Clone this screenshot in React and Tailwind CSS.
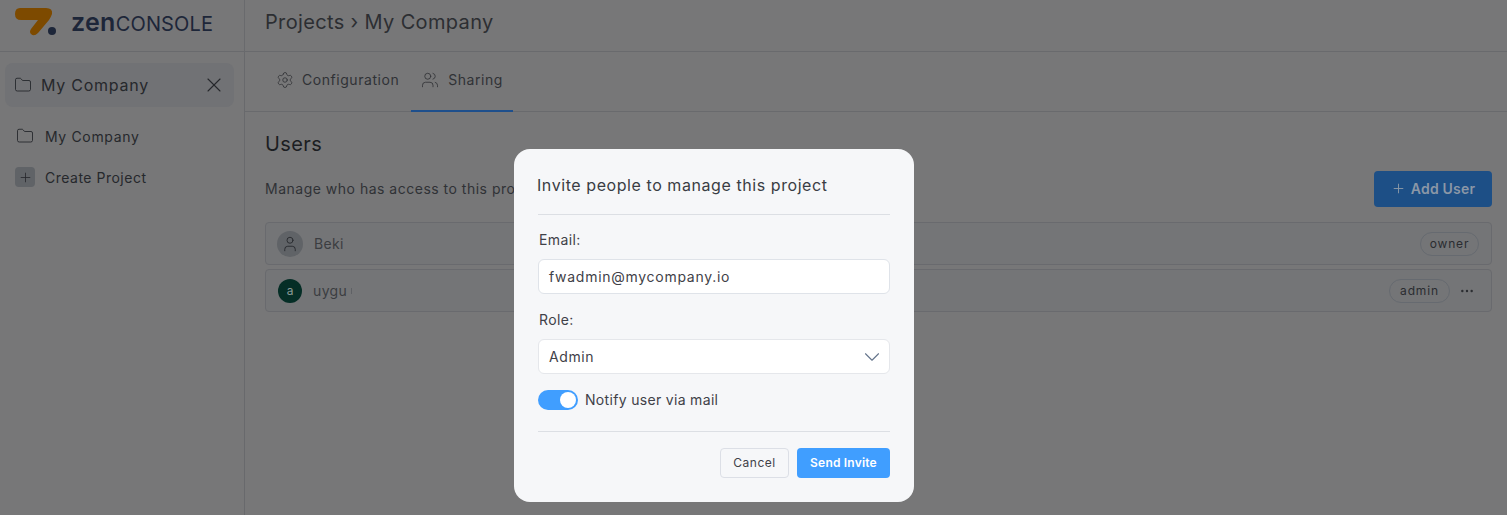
import React from "react";
import { Folder, X, Plus, Settings, Users, User, Ellipsis, ChevronDown } from "lucide-react";

function Logo() {
  return (
    <div className="flex items-start h-[51px] w-[244px] shrink-0 pl-[15px] pt-[8px] gap-[14px]">
      <svg width="42" height="30" viewBox="15 8 42 30" className="shrink-0">
        <path d="M20 8 H46 Q53 8 52 14 Q51 17 49 20 L38 33 Q34 37 31 34 Q29 32 31 29 L38 20 H21 Q15 20 15 14 Q15 8 20 8 Z" fill="#7d4a00" />
        <circle cx="52" cy="31" r="4" fill="#1d2639" />
      </svg>
      <span className="text-[25px] leading-[28px] tracking-[0.3px] text-[#1d2639] whitespace-nowrap">
        <span className="font-semibold">zen</span><span className="uppercase text-[20px] tracking-[0.15px]">console</span>
      </span>
    </div>
  );
}

function Sidebar() {
  return (
    <aside className="w-[245px] shrink-0 border-r border-[#68696c] pt-[11px] px-[5px] text-[#26282c]">
      <div className="h-[44px] w-[229px] rounded-lg bg-[#717275] flex items-center pl-[9px] pr-[8px]">
        <Folder size={18} strokeWidth={1.2} className="shrink-0" />
        <span className="ml-[9px] text-[16px] tracking-[0.75px] flex-1">My Company</span>
        <X size={24} strokeWidth={1.1} className="shrink-0" />
      </div>
      <div className="flex items-center h-[20px] mt-[19px] pl-[11px]">
        <Folder size={18} strokeWidth={1.2} className="shrink-0" />
        <span className="ml-[11px] text-[14px] tracking-[0.65px]">My Company</span>
      </div>
      <div className="flex items-center h-[20px] mt-[21px] pl-[10px]">
        <div className="w-[20px] h-[20px] rounded bg-[#606367] flex items-center justify-center shrink-0">
          <Plus size={15} strokeWidth={1.3} />
        </div>
        <span className="ml-[10px] text-[14px] tracking-[0.5px]">Create Project</span>
      </div>
    </aside>
  );
}

function Row({ avatar, name, badge, badgeWidth, more, tick }) {
  return (
    <div className="h-[43px] rounded border border-[#696a6e] bg-[#747577] flex items-center pl-[11px] pr-[12px]">
      {avatar}
      <span className="ml-[11px] text-[14px] tracking-[0.35px] text-[#3b3d41]">{name}</span>
      {tick && <span className="ml-[4px] w-px h-[6px] bg-[#5f6165]" />}
      <span className="flex-1" />
      <span className={`${badgeWidth} h-[24px] rounded-full border border-[#666a70] flex items-center justify-center text-[12px] tracking-[0.85px] text-[#2a2c30]`}>{badge}</span>
      {more && <Ellipsis size={16} strokeWidth={1.6} className="ml-[9px] mr-[4px] text-[#2a2c30]" />}
    </div>
  );
}

function Main() {
  return (
    <main className="flex-1 min-w-0">
      <div className="h-[60px] border-b border-[#696a6d] flex pl-[20px] gap-[1px] text-[14px] tracking-[0.55px] text-[#303236]">
        <div className="px-[11px] flex items-center gap-[8px] pb-[4px]">
          <Settings size={18} strokeWidth={1.1} />
          <span>Configuration</span>
        </div>
        <div className="relative px-[10px] flex items-center gap-[9px] pb-[4px]">
          <Users size={18} strokeWidth={1.1} />
          <span>Sharing</span>
          <div className="absolute left-0 right-0 -bottom-[1px] h-[2px] bg-[#1e4f8c]" />
        </div>
      </div>
      <div className="pl-[20px] pr-[15px]">
        <h2 className="text-[20px] leading-[28px] tracking-[0.4px] text-[#1c1e22] mt-[18px]">Users</h2>
        <div className="flex items-center justify-between mt-[13px] h-[36px]">
          <p className="text-[14px] tracking-[0.5px] text-[#303236] pb-[1px]">Manage who has access to this project</p>
          <button className="w-[118px] h-[36px] rounded bg-[#1d4f86] text-[#8b97a6] text-[14px] font-semibold flex items-center justify-center gap-[5px] pb-[1px]">
            <Plus size={15} strokeWidth={1.5} />
            <span className="tracking-[0.2px]">Add User</span>
          </button>
        </div>
        <div className="flex flex-col gap-[4px] mt-[15px]">
          <Row
            badge="owner"
            badgeWidth="w-[59px]"
            name="Beki"
            avatar={<div className="w-[26px] h-[26px] rounded-full bg-[#606367] flex items-center justify-center text-[#26282c] shrink-0"><User size={18} strokeWidth={1.2} /></div>}
          />
          <Row
            badge="admin"
            badgeWidth="w-[61px]"
            more
            tick
            name="uygu"
            avatar={<div className="w-[24px] h-[24px] ml-[1px] rounded-full bg-[#052e26] flex items-center justify-center text-[#8a9a96] text-[12px] shrink-0">a</div>}
          />
        </div>
      </div>
    </main>
  );
}

function Modal() {
  return (
    <div className="absolute left-[514px] top-[149px] w-[400px] h-[353px] rounded-[16px] bg-[#f6f7f9] px-[24px] pt-[24px] text-[#3f4148]">
      <h3 className="text-[16px] leading-[24px] -ml-[1px] tracking-[0.57px] text-[#3a3d44]">Invite people to manage this project</h3>
      <div className="h-px bg-[#dcdfe4] mt-[17px]" />
      <label className="block text-[14px] leading-[20px] mt-[15px] ml-[1px] tracking-[0.4px]">Email:</label>
      <div className="h-[35px] mt-[9px] rounded-md border border-[#dfe3e9] bg-white flex items-center px-[10px] text-[14px] tracking-[0.72px]">fwadmin@mycompany.io</div>
      <label className="block text-[14px] leading-[20px] mt-[16px] ml-[1px] tracking-[0.4px]">Role:</label>
      <div className="h-[35px] mt-[9px] rounded-md border border-[#e5e7eb] bg-white flex items-center justify-between pl-[10px] pr-[4px] text-[14px] tracking-[0.62px]">
        <span className="pb-[1px]">Admin</span>
        <ChevronDown size={26} strokeWidth={1} className="text-[#64748b]" />
      </div>
      <div className="flex items-center mt-[16px] h-[20px]">
        <div className="w-[40px] h-[20px] rounded-full bg-[#409eff] flex items-center justify-end pr-[2px] shrink-0">
          <div className="w-[16px] h-[16px] rounded-full bg-white" />
        </div>
        <span className="ml-[7px] text-[14px] tracking-[0.32px] pb-[1px]">Notify user via mail</span>
      </div>
      <div className="h-px bg-[#dcdfe4] mt-[21px]" />
      <div className="flex justify-end gap-[8px] mt-[16px]">
        <button className="w-[69px] h-[30px] rounded border border-[#dcdfe6] text-[12px] tracking-[0.5px] text-[#3f4148]">Cancel</button>
        <button className="w-[93px] h-[30px] rounded bg-[#409eff] text-[12px] tracking-[0.2px] text-white font-semibold">Send Invite</button>
      </div>
    </div>
  );
}

export default function App() {
  return (
    <div className="relative w-[1507px] h-[515px] overflow-hidden bg-[#777778] font-['Inter','Liberation_Sans',sans-serif]">
      <div className="h-[52px] border-b border-[#696a6d] flex">
        <Logo />
        <div className="border-l border-[#696a6d] flex items-center pl-[20px] pb-[7px] text-[20px] tracking-[0.35px] text-[#2c2e32] flex-1">Projects › My Company</div>
      </div>
      <div className="flex h-[463px]">
        <Sidebar />
        <Main />
      </div>
      <Modal />
    </div>
  );
}
